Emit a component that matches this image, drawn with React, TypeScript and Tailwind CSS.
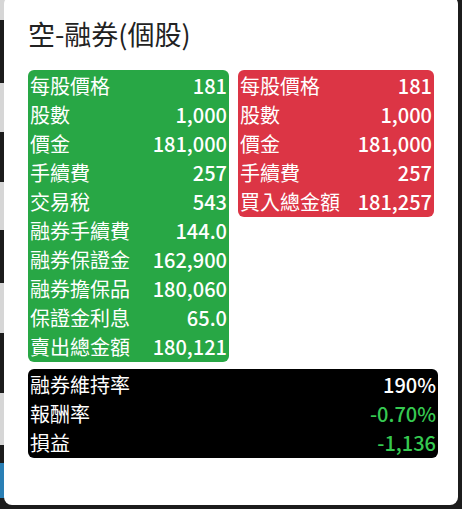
import React from 'react';

const font = { fontFamily: '"Noto Sans CJK TC", "Noto Sans", sans-serif' };

const sellRows: [string, string][] = [
  ['每股價格', '181'],
  ['股數', '1,000'],
  ['價金', '181,000'],
  ['手續費', '257'],
  ['交易稅', '543'],
  ['融券手續費', '144.0'],
  ['融券保證金', '162,900'],
  ['融券擔保品', '180,060'],
  ['保證金利息', '65.0'],
  ['賣出總金額', '180,121'],
];

const buyRows: [string, string][] = [
  ['每股價格', '181'],
  ['股數', '1,000'],
  ['價金', '181,000'],
  ['手續費', '257'],
  ['買入總金額', '181,257'],
];

// stripes of the page behind the modal (left edge only shows through)
const bands = [
  { h: 'h-[20px]', c: 'bg-[#d6d6d6]' },
  { h: 'h-[63px]', c: 'bg-[#1c1c1c]' },
  { h: 'h-[49px]', c: 'bg-[#d6d6d6]' },
  { h: 'h-[50px]', c: 'bg-[#1c1c1c]' },
  { h: 'h-[48px]', c: 'bg-[#d6d6d6]' },
  { h: 'h-[53px]', c: 'bg-[#1c1c1c]' },
  { h: 'h-[50px]', c: 'bg-[#d6d6d6]' },
  { h: 'h-[60px]', c: 'bg-[#1c1c1c]' },
  { h: 'h-[52px]', c: 'bg-[#d6d6d6]' },
  { h: 'h-[18px]', c: 'bg-[#1c1c1c]' },
  { h: 'h-[35px]', c: 'bg-[#2a7fb5]' },
];

function Row({ label, value, valueClass = '' }: { label: string; value: string; valueClass?: string }) {
  return (
    <div className="flex justify-between px-[2px] leading-[29px] text-[20px]">
      <span>{label}</span>
      <span className={`font-medium ${valueClass}`}>{value}</span>
    </div>
  );
}

export default function App() {
  return (
    <div className="relative w-[462px] h-[509px] overflow-hidden bg-[#1c1c1c]" style={font}>
      <div className="flex flex-col w-[12px]">
        {bands.map((b, i) => (
          <div key={i} className={`${b.h} ${b.c}`} />
        ))}
      </div>

      <div className="absolute left-[4px] top-[-4px] w-[454px] h-[509px] bg-white rounded-lg pl-[24px] pt-[22px]">
        <h2 className="text-[27px] leading-[31px] text-[#222]">空-融券(個股)</h2>

        <div className="flex items-start gap-[9px] mt-[21px] text-white">
          <div className="w-[201px] bg-[#28a745] rounded-md py-[1px]">
            {sellRows.map(([l, v]) => (
              <Row key={l} label={l} value={v} />
            ))}
          </div>
          <div className="w-[196px] bg-[#dc3545] rounded-md py-[1px]">
            {buyRows.map(([l, v]) => (
              <Row key={l} label={l} value={v} />
            ))}
          </div>
        </div>

        <div className="w-[410px] mt-[7px] bg-black text-white rounded-md py-[1px]">
          <Row label="融券維持率" value="190%" />
          <Row label="報酬率" value="-0.70%" valueClass="text-[#36c951]" />
          <Row label="損益" value="-1,136" valueClass="text-[#36c951]" />
        </div>
      </div>
    </div>
  );
}
